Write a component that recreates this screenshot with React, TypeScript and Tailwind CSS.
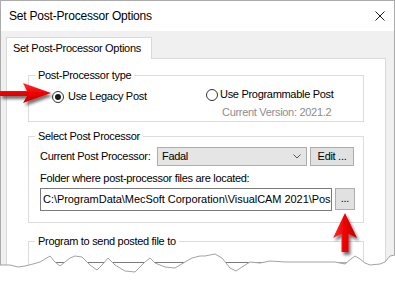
const tearTop = [
  [0, 265], [10, 265], [18, 267], [25, 266], [33, 264], [40, 262], [45, 259], [50, 256],
  [55, 262], [60, 266], [65, 262], [70, 258], [75, 256], [82, 257], [90, 265], [97, 270],
  [103, 264], [108, 258], [115, 265], [125, 271], [135, 272], [145, 262], [150, 258],
  [155, 263], [165, 267], [175, 268], [185, 262], [192, 258], [200, 256], [205, 256],
  [215, 254], [222, 258], [230, 268], [236, 271], [242, 267], [250, 262], [260, 263],
  [270, 261], [285, 262], [300, 262], [320, 262], [335, 262], [345, 264], [351, 259],
  [355, 256], [360, 259], [365, 263], [370, 265], [380, 264], [385, 262], [390, 256],
  [395, 255],
];

function Radio({ checked }: { checked?: boolean }) {
  return (
    <span className="flex h-[12px] w-[12px] shrink-0 items-center justify-center rounded-full border border-[#333333] bg-white">
      {checked && <span className="h-[6px] w-[6px] rounded-full bg-[#1a1a1a]" />}
    </span>
  );
}

function GroupBox({
  label,
  className,
  children,
}: {
  label: string;
  className: string;
  children: React.ReactNode;
}) {
  return (
    <fieldset className={`border border-[#dcdcdc] ${className}`}>
      <legend className="ml-[6px] px-[3px] leading-[13px]">{label}</legend>
      {children}
    </fieldset>
  );
}

function Arrows() {
  return (
    <svg className="pointer-events-none absolute left-0 top-0" width="395" height="281">
      <defs>
        <linearGradient id="redH" x1="0" y1="0" x2="0" y2="1">
          <stop offset="0" stopColor="#ff3030" />
          <stop offset="0.5" stopColor="#f00000" />
          <stop offset="1" stopColor="#b80000" />
        </linearGradient>
        <linearGradient id="redV" x1="0" y1="0" x2="1" y2="0">
          <stop offset="0" stopColor="#ff3030" />
          <stop offset="0.5" stopColor="#f00000" />
          <stop offset="1" stopColor="#b80000" />
        </linearGradient>
        <filter id="shadow" x="-30%" y="-30%" width="160%" height="160%">
          <feDropShadow dx="2" dy="3" stdDeviation="1.6" floodColor="#000" floodOpacity="0.55" />
        </filter>
      </defs>
      <polygon
        points="0,91 27,91 23,83 51,93 23,103 27,96 0,96"
        fill="url(#redH)"
        filter="url(#shadow)"
      />
      <polygon
        points="345,213 357,238 348.5,234 348.5,252 341.5,252 341.5,234 333,238"
        fill="url(#redV)"
        filter="url(#shadow)"
      />
    </svg>
  );
}

function Tear() {
  const line = tearTop.map((p) => p.join(",")).join(" ");
  return (
    <svg className="pointer-events-none absolute left-0 top-0" width="395" height="281">
      <polygon points={`${line} 395,281 0,281`} fill="#ffffff" />
      <polyline points={line} fill="none" stroke="#a3a3a3" strokeWidth="1" />
    </svg>
  );
}

export default function App() {
  return (
    <div className="relative h-[281px] w-[395px] overflow-hidden bg-white font-['Liberation_Sans',Arial,sans-serif] text-[11px] tracking-[-0.3px] text-black">
      <div className="flex h-full flex-col border-x border-t border-[#ababab]">
        <div className="flex h-[30px] shrink-0 items-center justify-between bg-white pl-[8px] pr-[9px]">
          <span className="text-[12px] tracking-[-0.2px]">Set Post-Processor Options</span>
          <svg width="10" height="10" viewBox="0 0 10 10">
            <path d="M0.5 0.5 L9.5 9.5 M9.5 0.5 L0.5 9.5" stroke="#1a1a1a" strokeWidth="1" />
          </svg>
        </div>

        <div className="flex-1 bg-[#f0f0f0] pl-[5px] pr-[8px] pt-[6px]">
          <div className="relative z-10 -mb-px flex h-[22px] w-[146px] items-center border-x border-t border-[#d9d9d9] bg-white pl-[6px]">
            Set Post-Processor Options
          </div>

          <div className="h-[260px] border border-[#d9d9d9] bg-white px-[21px]">
            <GroupBox label="Post-Processor type" className="mt-[10px] h-[53px]">
              <div className="flex">
                <div className="ml-[23px] mt-[8px] flex w-[154px] items-center gap-[4px] self-start leading-[13px]">
                  <Radio checked />
                  <span>Use Legacy Post</span>
                </div>
                <div className="flex flex-col pt-[6px] leading-[13px]">
                  <div className="flex items-center gap-[2px]">
                    <Radio />
                    <span>Use Programmable Post</span>
                  </div>
                  <span className="mt-[5px] pl-[16px] text-[#8d8d8d]">Current Version: 2021.2</span>
                </div>
              </div>
            </GroupBox>

            <GroupBox label="Select Post Processor" className="mt-[8px] h-[93px]">
              <div className="pl-[11px] pt-[4px] leading-[13px]">
                <div className="flex items-center">
                  <span className="w-[117px]">Current Post Processor:</span>
                  <div className="flex h-[19px] w-[150px] items-center justify-between border border-[#adadad] bg-[#e5e5e5] pl-[4px] pr-[5px]">
                    <span>Fadal</span>
                    <svg width="8" height="5" viewBox="0 0 8 5">
                      <path d="M0.5 0.5 L4 4 L7.5 0.5" fill="none" stroke="#555" strokeWidth="1" />
                    </svg>
                  </div>
                  <div className="ml-[3px] flex h-[19px] w-[44px] items-center justify-center self-start border border-[#adadad] bg-[#e1e1e1]">
                    Edit ...
                  </div>
                </div>
                <div className="mt-[6px]">Folder where post-processor files are located:</div>
                <div className="mt-[3px] flex">
                  <div className="flex h-[23px] w-[292px] items-center overflow-hidden whitespace-nowrap border border-[#7a7a7a] bg-white pl-[2px] tracking-[-0.05px]">
                    {"C:\\ProgramData\\MecSoft Corporation\\VisualCAM 2021\\Pos"}
                  </div>
                  <div className="ml-[3px] flex h-[22px] w-[20px] items-center justify-center border border-[#adadad] bg-[#e1e1e1] pb-[2px]">
                    ...
                  </div>
                </div>
              </div>
            </GroupBox>

            <GroupBox label="Program to send posted file to" className="mt-[12px] h-[60px]">
              <div className="mt-[14px] flex pl-[11px]">
                <div className="h-[23px] w-[292px] border border-[#7a7a7a] bg-white" />
                <div className="ml-[3px] h-[22px] w-[20px] border border-[#adadad] bg-[#e1e1e1]" />
              </div>
            </GroupBox>
          </div>
        </div>
      </div>

      <Arrows />
      <Tear />
    </div>
  );
}
